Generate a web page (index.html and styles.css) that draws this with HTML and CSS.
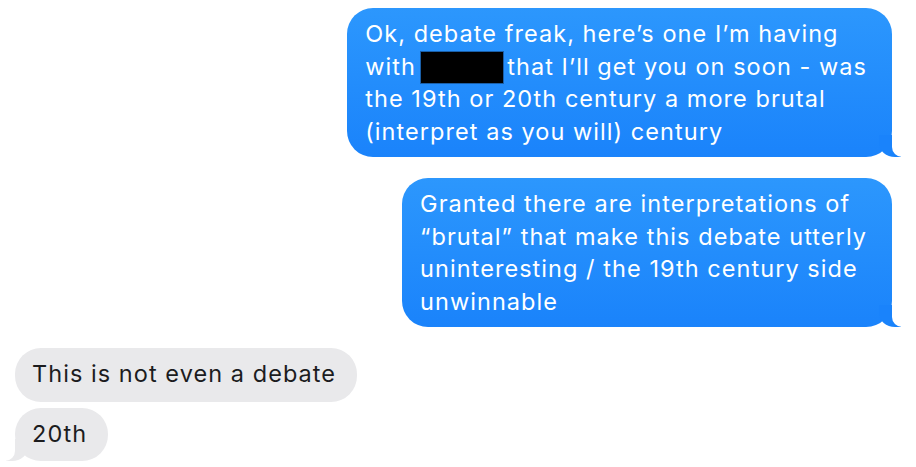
FILE: index.html
```html
<!DOCTYPE html>
<html>
<head>
<meta charset="utf-8">
<link rel="stylesheet" href="styles.css">
</head>
<body>
<div class="thread">
  <div class="bubble sent first">Ok, debate freak, here’s one I’m having<br>with <span class="redact"></span> that I’ll get you on soon - was<br>the 19th or 20th century a more brutal<br>(interpret as you will) century</div>
  <div class="bubble sent second">Granted there are interpretations of<br>“brutal” that make this debate utterly<br>uninteresting / the 19th century side<br>unwinnable</div>
  <div class="bubble recv">This is not even a debate</div>
  <div class="bubble recv last">20th</div>
</div>
</body>
</html>
```
FILE: styles.css
```css
html, body {
  margin: 0;
  padding: 0;
  background: #ffffff;
}
.thread {
  display: flex;
  flex-direction: column;
  padding: 8px 24px 0 15px;
  font-family: Inter, "Noto Sans", sans-serif;
  font-size: 23.5px;
  line-height: 32.5px;
  letter-spacing: 1.05px;
}
.bubble {
  position: relative;
  padding: 10px 25px 9px 18px;
  border-radius: 26px;
}
.sent {
  align-self: flex-end;
  color: #ffffff;
  background: linear-gradient(to bottom, #2c97fd, #1a83fb);
}
.sent.first {
  margin-bottom: 21px;
}
.sent.second {
  margin-bottom: 21px;
}
.recv {
  align-self: flex-start;
  color: #1c1c1e;
  background: #e9e9eb;
  padding: 10px 21px 11px 17px;
}
.recv + .recv {
  margin-top: 6px;
}
.redact {
  display: inline-block;
  width: 82px;
  height: 31px;
  background: #000;
  box-shadow: 0 0 0 1px #1a5fa8;
  vertical-align: -8px;
  margin: 0 -3px;
}
.sent::before {
  content: "";
  position: absolute;
  bottom: 0;
  right: -9px;
  width: 22px;
  height: 22px;
  background: #1a83fb;
  border-bottom-left-radius: 16px 14px;
}
.sent::after {
  content: "";
  position: absolute;
  bottom: 0;
  right: -26px;
  width: 26px;
  height: 24px;
  background: #ffffff;
  border-bottom-left-radius: 10px;
}
.recv.last::before {
  content: "";
  position: absolute;
  bottom: 0;
  left: -9px;
  width: 22px;
  height: 22px;
  background: #e9e9eb;
  border-bottom-right-radius: 16px 14px;
}
.recv.last::after {
  content: "";
  position: absolute;
  bottom: 0;
  left: -26px;
  width: 26px;
  height: 24px;
  background: #ffffff;
  border-bottom-right-radius: 10px;
}
```
